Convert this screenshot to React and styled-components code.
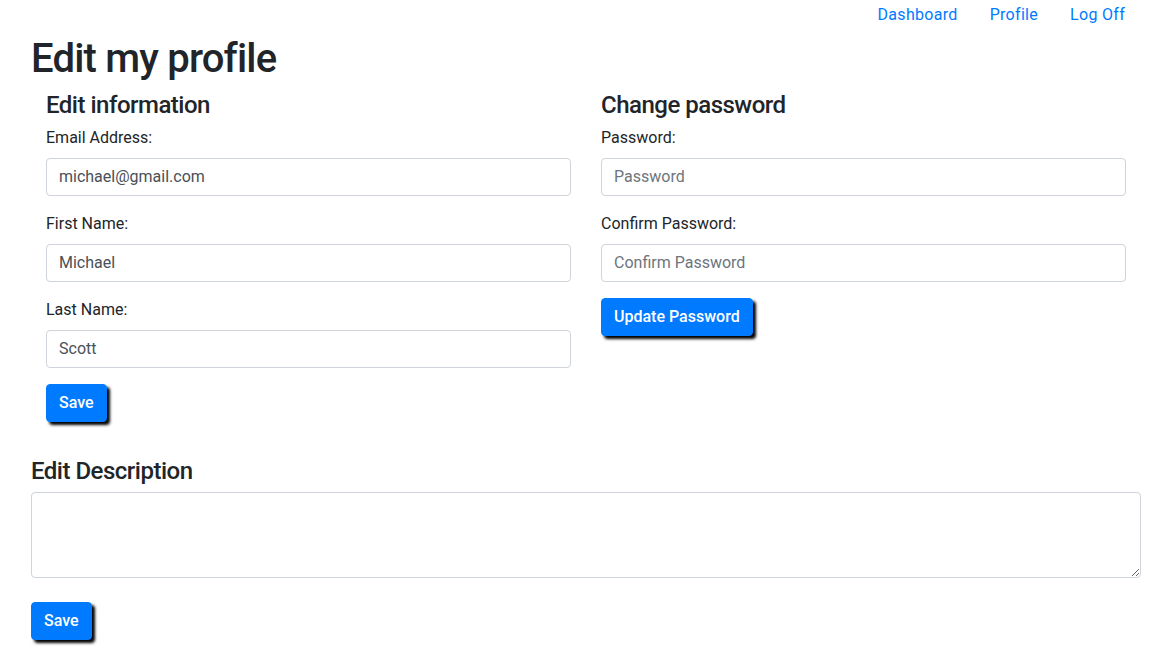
import React from "react";
import styled, { createGlobalStyle } from "styled-components";

const Global = createGlobalStyle`
  *, *::before, *::after { box-sizing: border-box; }
  body {
    margin: 0;
    font-family: Roboto, "Liberation Sans", sans-serif;
    font-size: 16px;
    line-height: 1.5;
    color: #212529;
    background: #fff;
  }
`;

const Container = styled.div`
  padding: 0 32px 24px 31px;
`;

const Nav = styled.ul`
  display: flex;
  justify-content: flex-end;
  list-style: none;
  margin: 0;
  padding: 3px 0 8px;
`;

const NavLink = styled.a`
  display: block;
  padding: 0 16px;
  color: #007bff;
  text-decoration: none;
  line-height: 24px;
  letter-spacing: 0.3px;
`;

const Title = styled.h1`
  margin: 0 0 8px;
  font-size: 40px;
  font-weight: 500;
  line-height: 1.2;
  letter-spacing: -0.8px;
`;

const Row = styled.div`
  display: grid;
  grid-template-columns: 1fr 1fr;
`;

const Col = styled.div`
  padding: 0 15px;
`;

const Heading = styled.h4`
  margin: 0 0 6px;
  font-size: 24px;
  font-weight: 500;
  line-height: 1.2;
  letter-spacing: -0.5px;
`;

const Group = styled.div`
  margin-bottom: 16px;
`;

const Label = styled.label`
  display: block;
  margin-bottom: 8px;
  line-height: 24px;
`;

const Input = styled.input`
  display: block;
  width: 100%;
  height: 38px;
  padding: 6px 12px;
  font: inherit;
  font-size: 16px;
  line-height: 24px;
  color: #495057;
  background: #fff;
  border: 1px solid #ced4da;
  border-radius: 4px;
  &::placeholder { color: #6c757d; opacity: 1; }
`;

const TextArea = styled.textarea`
  display: block;
  width: 100%;
  height: 86px;
  padding: 6px 12px;
  font: inherit;
  color: #495057;
  border: 1px solid #ced4da;
  border-radius: 4px;
  resize: vertical;
`;

const Button = styled.button`
  display: inline-block;
  padding: 6px 12px;
  font: inherit;
  font-weight: 500;
  line-height: 24px;
  color: #fff;
  background: #007bff;
  border: 1px solid #007bff;
  border-radius: 4px;
  box-shadow: 3px 3px 3px #000;
  cursor: pointer;
`;

const Section = styled.div`
  margin-top: ${(p) => p.$top || 0}px;
`;

const Field = ({ label, value, placeholder }) => (
  <Group>
    <Label>{label}</Label>
    <Input defaultValue={value} placeholder={placeholder} />
  </Group>
);

export default function App() {
  return (
    <>
      <Global />
      <Container>
        <Nav>
          <li><NavLink href="#">Dashboard</NavLink></li>
          <li><NavLink href="#">Profile</NavLink></li>
          <li><NavLink href="#">Log Off</NavLink></li>
        </Nav>
        <Title>Edit my profile</Title>
        <Row>
          <Col>
            <Heading>Edit information</Heading>
            <Field label="Email Address:" value="michael@gmail.com" />
            <Field label="First Name:" value="Michael" />
            <Field label="Last Name:" value="Scott" />
            <Button>Save</Button>
          </Col>
          <Col>
            <Heading>Change password</Heading>
            <Field label="Password:" placeholder="Password" />
            <Field label="Confirm Password:" placeholder="Confirm Password" />
            <Button>Update Password</Button>
          </Col>
        </Row>
        <Section $top={35}>
          <Heading>Edit Description</Heading>
          <TextArea />
          <Section $top={24}>
            <Button>Save</Button>
          </Section>
        </Section>
      </Container>
    </>
  );
}
